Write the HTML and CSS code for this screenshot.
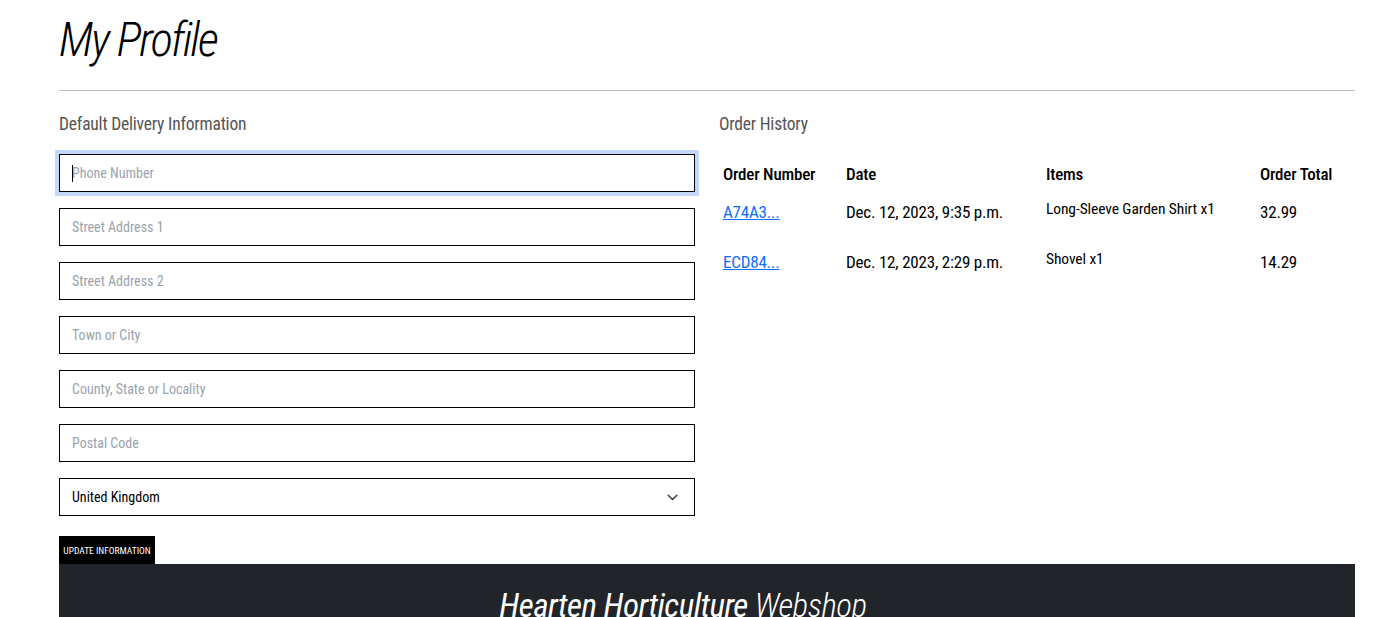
FILE: index.html
```html
<!DOCTYPE html>
<html lang="en">
<head>
<meta charset="utf-8">
<title>My Profile</title>
<link rel="stylesheet" href="styles.css">
</head>
<body>
<main class="page">
  <h1 class="title">My Profile</h1>
  <hr class="rule">
  <div class="cols">
    <section class="col">
      <h2 class="section-title">Default Delivery Information</h2>
      <form class="form">
        <div class="field focused">
          <input class="input" type="text" placeholder="Phone Number">
          <span class="caret"></span>
        </div>
        <div class="field"><input class="input" type="text" placeholder="Street Address 1"></div>
        <div class="field"><input class="input" type="text" placeholder="Street Address 2"></div>
        <div class="field"><input class="input" type="text" placeholder="Town or City"></div>
        <div class="field"><input class="input" type="text" placeholder="County, State or Locality"></div>
        <div class="field"><input class="input" type="text" placeholder="Postal Code"></div>
        <div class="field select-wrap">
          <select class="input select">
            <option>United Kingdom</option>
          </select>
          <svg class="chevron" width="11" height="7" viewBox="0 0 11 7"><path d="M1.2 1.2l4.3 4.3 4.3-4.3" fill="none" stroke="#3a3f45" stroke-width="1.5" stroke-linecap="round" stroke-linejoin="round"/></svg>
        </div>
        <button class="btn" type="button">Update Information</button>
      </form>
    </section>
    <section class="col">
      <h2 class="section-title">Order History</h2>
      <table class="orders">
        <thead>
          <tr><th class="c1">Order Number</th><th class="c2">Date</th><th class="c3">Items</th><th class="c4">Order Total</th></tr>
        </thead>
        <tbody>
          <tr><td><a href="#">A74A3...</a></td><td>Dec. 12, 2023, 9:35 p.m.</td><td class="items">Long-Sleeve Garden Shirt x1</td><td>32.99</td></tr>
          <tr><td><a href="#">ECD84...</a></td><td>Dec. 12, 2023, 2:29 p.m.</td><td class="items">Shovel x1</td><td>14.29</td></tr>
        </tbody>
      </table>
    </section>
  </div>
  <footer class="footer">
    <p class="brand"><strong>Hearten Horticulture</strong> Webshop</p>
  </footer>
</main>
</body>
</html>
```
FILE: styles.css
```css
* { box-sizing: border-box; }
html, body { margin: 0; padding: 0; background: #fff; }
body {
  font-family: "Roboto Condensed", "DejaVu Sans", sans-serif;
  font-stretch: condensed;
  color: #000;
  overflow: hidden;
}
.page {
  width: 1296px;
  margin-left: 59px;
}
.title {
  margin: 0;
  padding-top: 14px;
  font-size: 47px;
  line-height: 52px;
  font-weight: 300;
  font-style: italic;
  letter-spacing: -2px;
  white-space: nowrap;
}
.rule {
  margin: 24px 0 0 0;
  border: 0;
  border-top: 1px solid #bfbfbf;
  height: 0;
}
.cols {
  display: flex;
  gap: 24px;
  margin-top: 22px;
}
.col { width: 636px; }
.section-title {
  margin: 0;
  font-size: 17.5px;
  line-height: 22px;
  font-weight: 400;
  color: #555;
  letter-spacing: -0.2px;
}
.form {
  display: flex;
  flex-direction: column;
  gap: 16px;
  margin-top: 19px;
}
.field { position: relative; }
.input {
  display: block;
  width: 636px;
  height: 38px;
  border: 1px solid #000;
  border-radius: 0;
  padding: 0 12px;
  font-family: inherit;
  font-stretch: condensed;
  font-size: 14px;
  letter-spacing: 0;
  color: #000;
  background: #fff;
  outline: none;
}
.input::placeholder { color: #9aa3ad; }
.focused .input { box-shadow: 0 0 0 4px #c3d8fb; }
.caret {
  position: absolute;
  left: 13px;
  top: 11px;
  width: 1px;
  height: 17px;
  background: #000;
}
.select {
  appearance: none;
  -webkit-appearance: none;
}
.chevron {
  position: absolute;
  right: 17px;
  top: 16px;
}
.btn {
  align-self: flex-start;
  margin-top: 4px;
  height: 28px;
  width: 96px;
  padding: 0;
  border: 0;
  border-radius: 0;
  background: #000;
  color: #fff;
  font-family: inherit;
  font-stretch: condensed;
  font-size: 9.5px;
  letter-spacing: 0;
  text-transform: uppercase;
  white-space: nowrap;
}
.orders {
  margin-top: 20px;
  width: 100%;
  border-collapse: collapse;
  font-size: 17px;
  letter-spacing: -0.2px;
}
.orders th {
  text-align: left;
  font-weight: 500;
  padding: 0 4px;
  height: 38px;
  white-space: nowrap;
  vertical-align: middle;
}
.orders td {
  padding: 7px 4px 0 4px;
  height: 50px;
  line-height: 24px;
  vertical-align: top;
  white-space: nowrap;
}
.orders .c1 { width: 123px; }
.orders .c2 { width: 200px; }
.orders .c3 { width: 214px; }
.orders td.items { font-size: 15.5px; letter-spacing: -0.1px; padding-top: 4px; }
.orders a { color: #0d6efd; text-decoration: underline; }
.footer {
  background: #212529;
  height: 80px;
  margin-top: 0;
  padding-top: 22px;
}
.brand {
  margin: 0;
  color: #fff;
  font-size: 33px;
  line-height: 40px;
  font-style: italic;
  font-weight: 300;
  letter-spacing: -0.5px;
  text-align: center;
  padding-right: 48px;
}
.brand strong { font-weight: 400; }
```
